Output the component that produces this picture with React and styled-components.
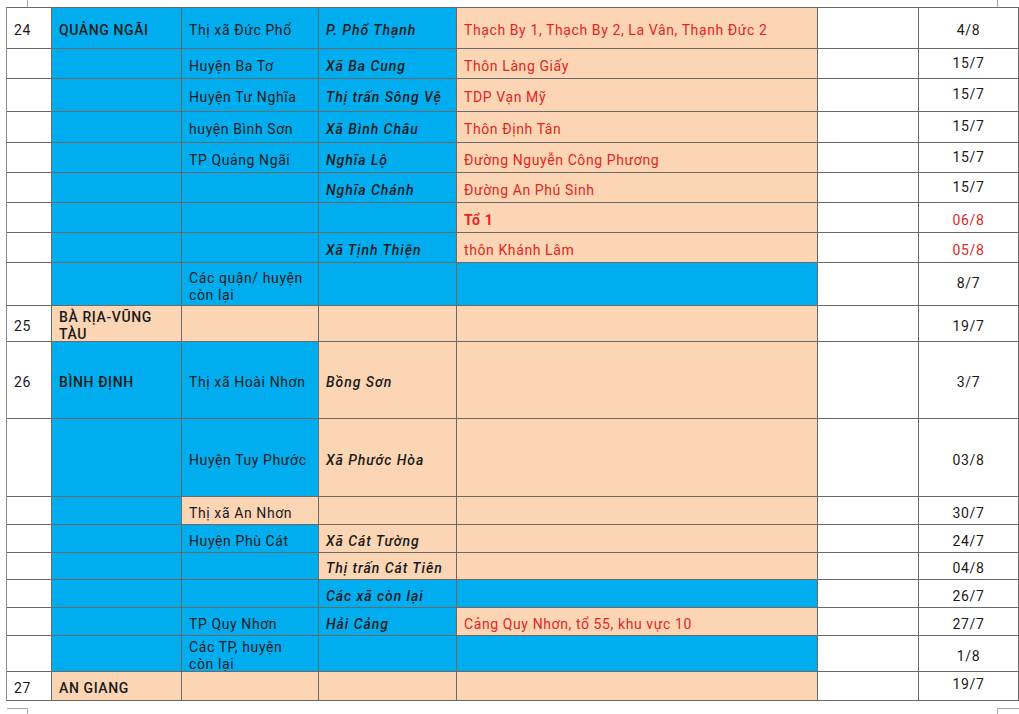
import React from "react";
import styled, { createGlobalStyle } from "styled-components";

const Global = createGlobalStyle`
  html, body { margin: 0; padding: 0; background: #fff; }
  body { font-family: Roboto, "Noto Sans", "Liberation Sans", sans-serif; font-size: 14px; color: #111; }
  * { box-sizing: border-box; }
`;

const COLORS = {
  w: "#ffffff",
  b: "#00aeef",
  p: "#fcd5b4",
};

const LINE = "#6a6a6a";

const Page = styled.div`
  width: 1019px;
  height: 714px;
  overflow: hidden;
  display: flex;
  flex-direction: column;
`;

const TopMarks = styled.div`
  height: 8px;
  display: flex;
  justify-content: space-between;
  padding: 0 21px 0 27px;
`;

const Tick = styled.div`
  width: 1px;
  height: 100%;
  background: #a8a8a8;
`;

const BottomMarks = styled.div`
  margin-top: 7px;
  height: 6px;
  display: flex;
  justify-content: space-between;
  padding-left: 7px;
`;

const Corner = styled.div`
  height: 100%;
  width: ${(p) => p.$w}px;
  border-top: 1px solid #a8a8a8;
  ${(p) => (p.$side === "left" ? "border-right" : "border-left")}: 1px solid #a8a8a8;
`;

const Table = styled.div`
  margin-left: 6px;
  width: 1013px;
  border-top: 1px solid ${LINE};
  border-left: 1px solid #8a8a8a;
  display: flex;
  flex-direction: column;
`;

const Row = styled.div`
  display: grid;
  grid-template-columns: 45px 130px 137px 138px 361px 101px 100px;
  height: ${(p) => p.$h}px;
`;

const Cell = styled.div`
  background: ${(p) => COLORS[p.$bg] || "#fff"};
  color: ${(p) => (p.$red ? "#e1261f" : "#1a1a1a")};
  font-weight: ${(p) => (p.$bold ? 700 : p.$semi ? 500 : 400)};
  font-style: ${(p) => (p.$italic ? "italic" : "normal")};
  letter-spacing: ${(p) => (p.$italic ? 0.95 : p.$semi || p.$bold ? 0.6 : 0.6)}px;
  border-right: 1px solid ${LINE};
  border-bottom: 1px solid ${LINE};
  display: flex;
  align-items: center;
  justify-content: ${(p) => (p.$center ? "center" : "flex-start")};
  padding: 5px 7px ${(p) => (p.$lift ? p.$lift * 2 : 0)}px 7px;
  line-height: 17px;
  white-space: nowrap;
  overflow: hidden;
`;

const Lines = styled.span`
  display: block;
  white-space: pre-line;
`;

const R = (h, cells) => ({ h, cells });
const c = (bg, text = "", f = {}) => ({ bg, text, ...f });

const rows = [
  R(41, [c("w", "24"), c("b", "QUẢNG NGÃI", { semi: true }), c("b", "Thị xã Đức Phổ"), c("b", "P. Phổ Thạnh", { italic: true, semi: true }), c("p", "Thạch By 1, Thạch By 2, La Vân, Thạnh Đức 2", { red: true }), c("w"), c("w", "4/8", { center: true })]),
  R(30, [c("w"), c("b"), c("b", "Huyện Ba Tơ"), c("b", "Xã Ba Cung", { italic: true, semi: true }), c("p", "Thôn Làng Giấy", { red: true }), c("w"), c("w", "15/7", { center: true, lift: 3 })]),
  R(33, [c("w"), c("b"), c("b", "Huyện Tư Nghĩa"), c("b", "Thị trấn Sông Vệ", { italic: true, semi: true }), c("p", "TDP Vạn Mỹ", { red: true }), c("w"), c("w", "15/7", { center: true, lift: 3 })]),
  R(31, [c("w"), c("b"), c("b", "huyện Bình Sơn"), c("b", "Xã Bình Châu", { italic: true, semi: true }), c("p", "Thôn Định Tân", { red: true }), c("w"), c("w", "15/7", { center: true, lift: 3 })]),
  R(30, [c("w"), c("b"), c("b", "TP Quảng Ngãi"), c("b", "Nghĩa Lộ", { italic: true, semi: true }), c("p", "Đường Nguyễn Công Phương", { red: true }), c("w"), c("w", "15/7", { center: true, lift: 3 })]),
  R(30, [c("w"), c("b"), c("b"), c("b", "Nghĩa Chánh", { italic: true, semi: true }), c("p", "Đường An Phú Sinh", { red: true }), c("w"), c("w", "15/7", { center: true, lift: 3 })]),
  R(30, [c("w"), c("b"), c("b"), c("b"), c("p", "Tổ 1", { red: true, bold: true }), c("w"), c("w", "06/8", { center: true, red: true })]),
  R(30, [c("w"), c("b"), c("b"), c("b", "Xã Tịnh Thiện", { italic: true, semi: true }), c("p", "thôn Khánh Lâm", { red: true }), c("w"), c("w", "05/8", { center: true, red: true })]),
  R(43, [c("w"), c("b"), c("b", "Các quận/ huyện\ncòn lại", { multi: true }), c("b"), c("b"), c("w"), c("w", "8/7", { center: true, lift: 3 })]),
  R(36, [c("w", "25"), c("p", "BÀ RỊA-VŨNG\nTÀU", { semi: true, multi: true }), c("p"), c("p"), c("p"), c("w"), c("w", "19/7", { center: true })]),
  R(77, [c("w", "26"), c("b", "BÌNH ĐỊNH", { semi: true }), c("b", "Thị xã Hoài Nhơn"), c("p", "Bồng Sơn", { italic: true, semi: true }), c("p"), c("w"), c("w", "3/7", { center: true })]),
  R(78, [c("w"), c("b"), c("b", "Huyện Tuy Phước"), c("p", "Xã Phước Hòa", { italic: true, semi: true }), c("p"), c("w"), c("w", "03/8", { center: true })]),
  R(28, [c("w"), c("b"), c("p", "Thị xã An Nhơn"), c("p"), c("p"), c("w"), c("w", "30/7", { center: true })]),
  R(28, [c("w"), c("b"), c("b", "Huyện Phù Cát"), c("p", "Xã Cát Tường", { italic: true, semi: true }), c("p"), c("w"), c("w", "24/7", { center: true })]),
  R(27, [c("w"), c("b"), c("b"), c("p", "Thị trấn Cát Tiên", { italic: true, semi: true }), c("p"), c("w"), c("w", "04/8", { center: true })]),
  R(28, [c("w"), c("b"), c("b"), c("b", "Các xã còn lại", { italic: true, semi: true }), c("b"), c("w"), c("w", "26/7", { center: true })]),
  R(28, [c("w"), c("b"), c("b", "TP Quy Nhơn"), c("b", "Hải Cảng", { italic: true, semi: true }), c("p", "Cảng Quy Nhơn, tổ 55, khu vực 10", { red: true }), c("w"), c("w", "27/7", { center: true })]),
  R(36, [c("w"), c("b"), c("b", "Các TP, huyện\ncòn lại", { multi: true }), c("b"), c("b"), c("w"), c("w", "1/8", { center: true })]),
  R(29, [c("w", "27"), c("p", "AN GIANG", { semi: true }), c("p"), c("p"), c("p"), c("w"), c("w", "19/7", { center: true, lift: 4 })]),
];

export default function App() {
  return (
    <Page>
      <Global />
      <TopMarks>
        <Tick />
        <Tick />
      </TopMarks>
      <Table>
        {rows.map((r, i) => (
          <Row key={i} $h={r.h}>
            {r.cells.map((cell, j) => (
              <Cell
                key={j}
                $bg={cell.bg}
                $red={cell.red}
                $bold={cell.bold}
                $semi={cell.semi}
                $italic={cell.italic}
                $center={cell.center}
                $lift={cell.lift}
              >
                {cell.multi ? <Lines>{cell.text}</Lines> : cell.text}
              </Cell>
            ))}
          </Row>
        ))}
      </Table>
      <BottomMarks>
        <Corner $w={21} $side="left" />
        <Corner $w={22} $side="right" />
      </BottomMarks>
    </Page>
  );
}
